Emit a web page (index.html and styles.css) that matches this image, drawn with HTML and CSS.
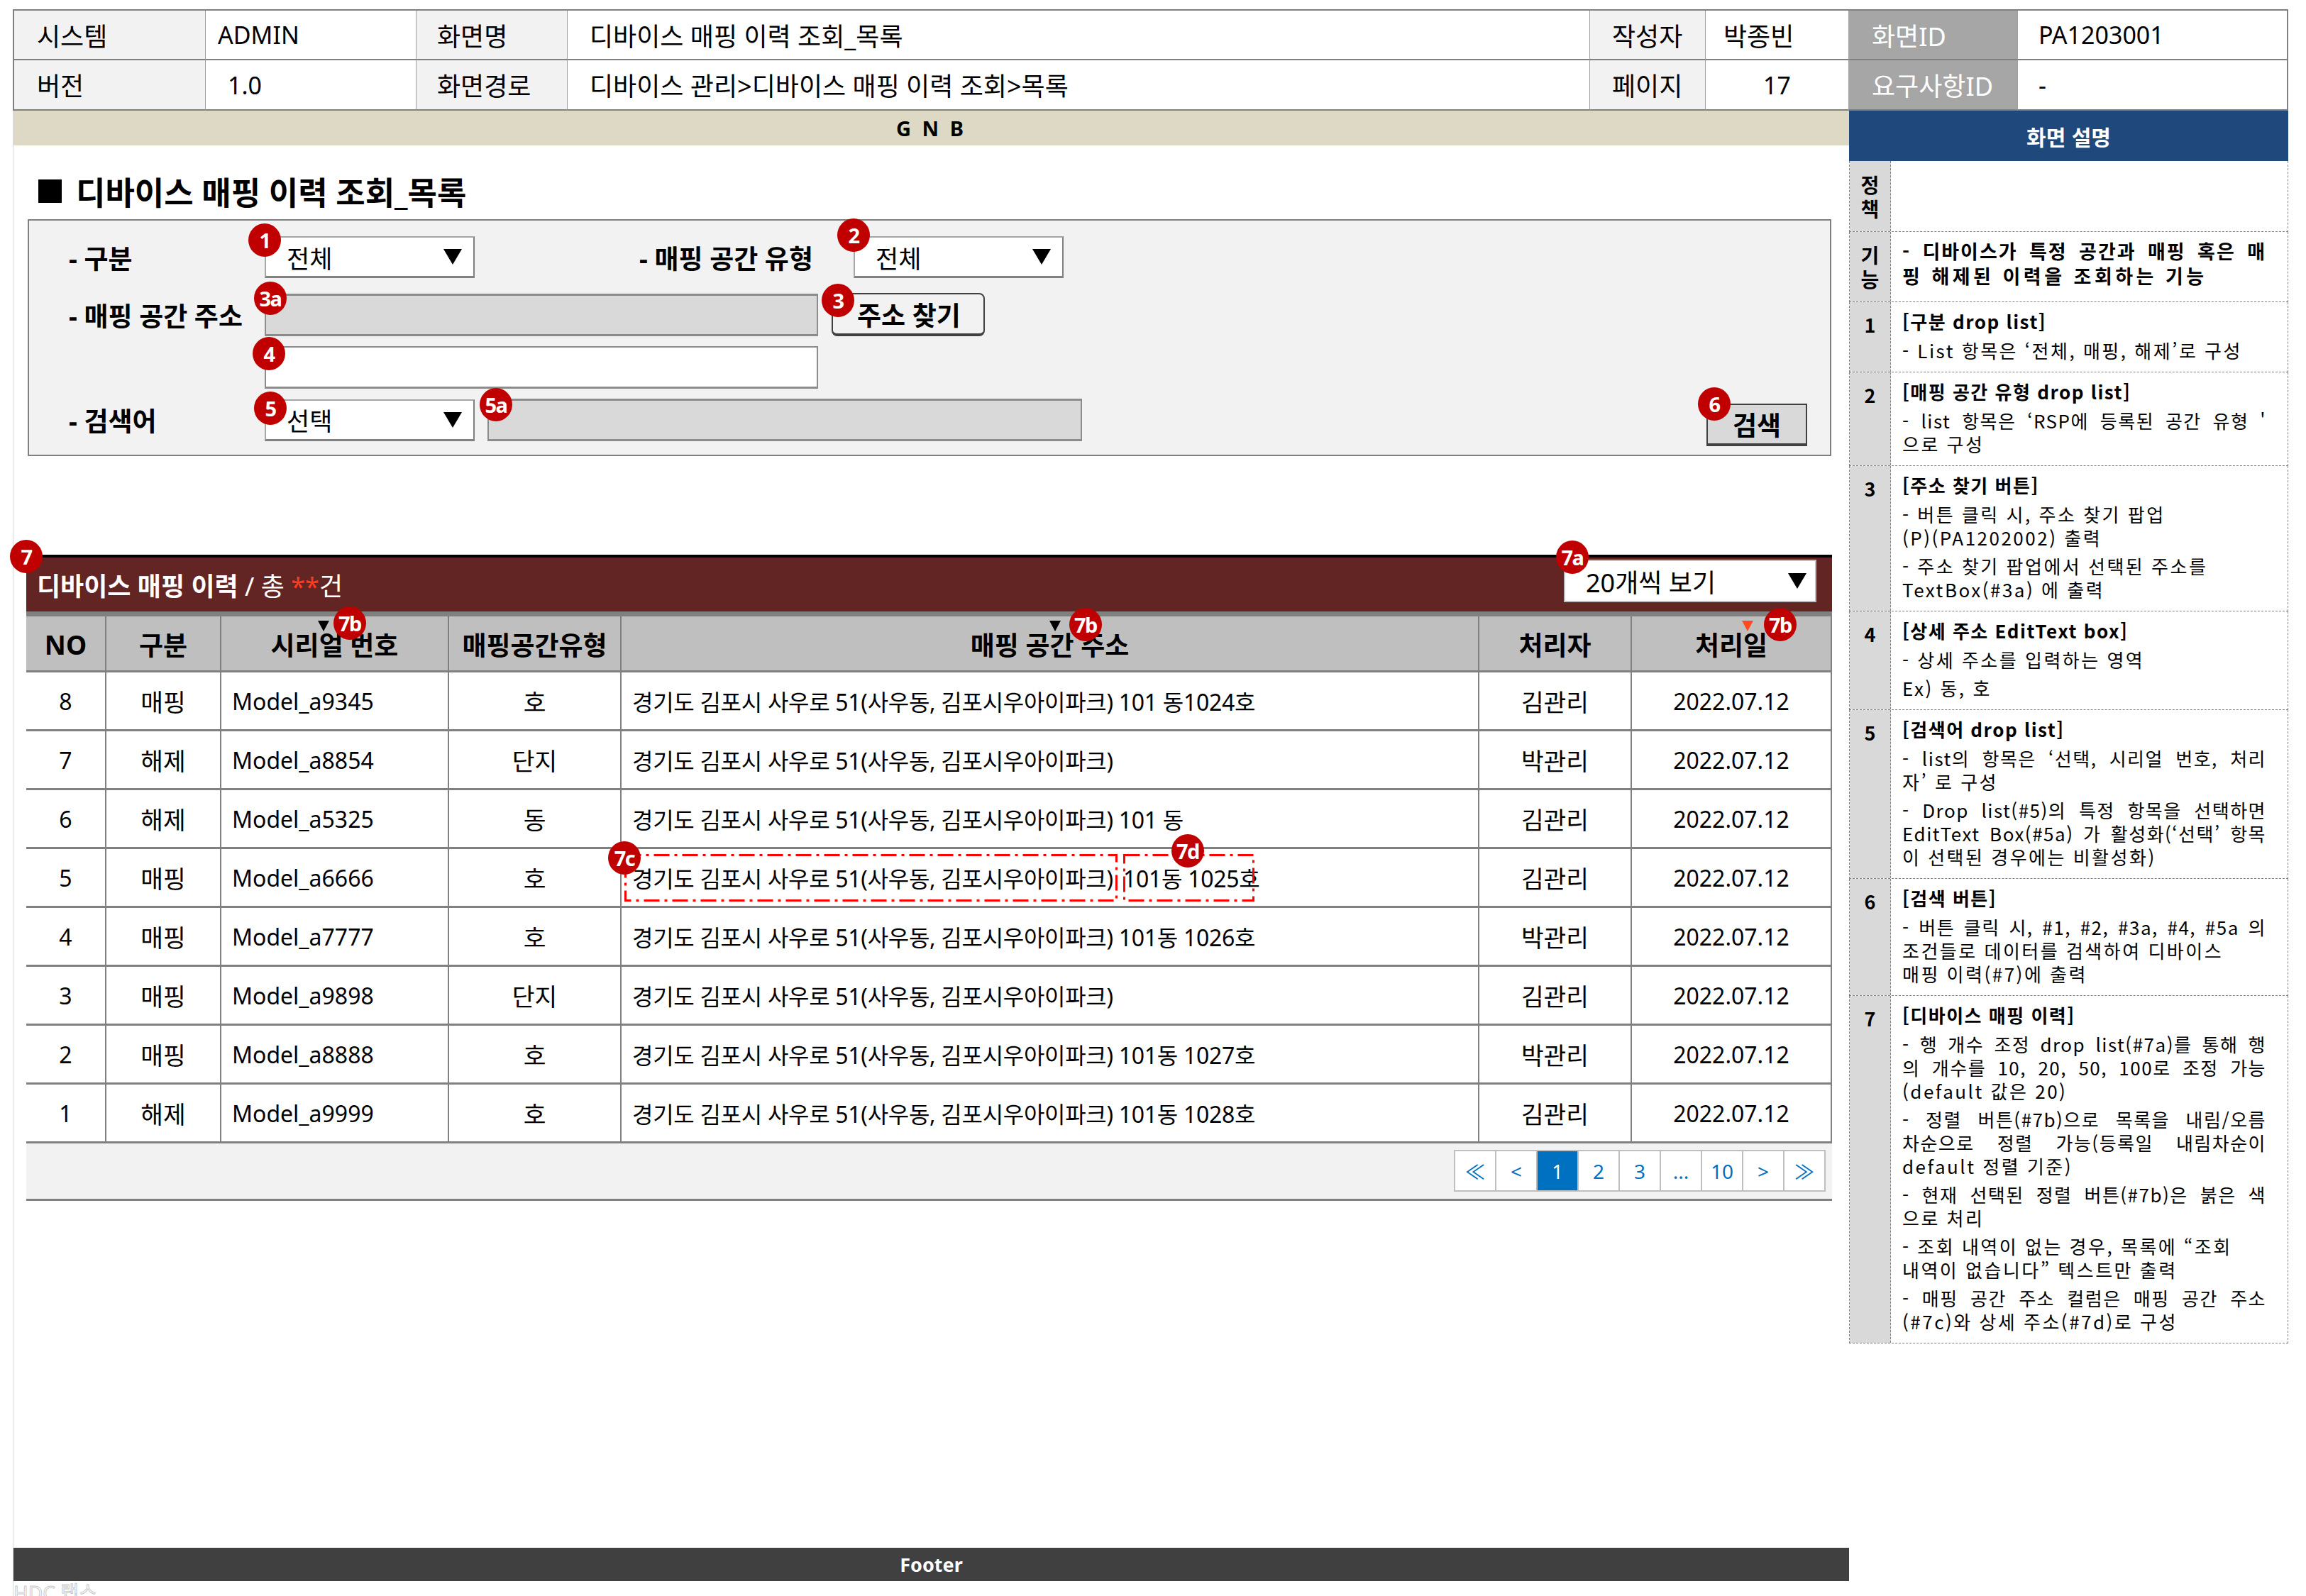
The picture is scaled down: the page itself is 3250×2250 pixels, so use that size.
FILE: index.html
```html
<!DOCTYPE html>
<html lang="ko">
<head>
<meta charset="utf-8">
<title>디바이스 매핑 이력 조회_목록</title>
<link rel="stylesheet" href="styles.css">
</head>
<body>
<div class="page">
  <div class="meta">
    <div class="c lab first p32">시스템</div>
    <div class="c val lat p17">ADMIN</div>
    <div class="c lab p29">화면명</div>
    <div class="c val p31">디바이스 매핑 이력 조회_목록</div>
    <div class="c lab p31">작성자</div>
    <div class="c val p25">박종빈</div>
    <div class="c dark p32">화면ID</div>
    <div class="c val lat last p29">PA1203001</div>
    <div class="c lab first p32">버전</div>
    <div class="c val lat p31">1.0</div>
    <div class="c lab p29">화면경로</div>
    <div class="c val p31">디바이스 관리&gt;디바이스 매핑 이력 조회&gt;목록</div>
    <div class="c lab p31">페이지</div>
    <div class="c val lat center">17</div>
    <div class="c dark p32">요구사항ID</div>
    <div class="c val lat last p29">-</div>
  </div>

  <div class="body">
    <div class="main">
      <div class="gnb">G N B</div>

      <h1 class="title"><span class="sq"></span>디바이스 매핑 이력 조회_목록</h1>

      <div class="search">
        <div class="srow r1">
          <div class="lbl">- 구분</div>
          <div class="sel">
            <span class="mk m1">1</span>
            <span>전체</span>
            <svg class="arr" viewBox="0 0 26 22"><polygon points="0,0 26,0 13,22"/></svg>
          </div>
          <div class="lbl lbl2">- 매핑 공간 유형</div>
          <div class="sel">
            <span class="mk m2">2</span>
            <span>전체</span>
            <svg class="arr" viewBox="0 0 26 22"><polygon points="0,0 26,0 13,22"/></svg>
          </div>
        </div>
        <div class="srow r2">
          <div class="lbl">- 매핑 공간 주소</div>
          <div class="tb dis wide"><span class="mk m3a">3a</span></div>
          <div class="btn addr"><span class="mk m3">3</span>주소 찾기</div>
        </div>
        <div class="srow r3">
          <div class="lbl"></div>
          <div class="tb wide"><span class="mk m4">4</span></div>
        </div>
        <div class="srow r4">
          <div class="lbl">- 검색어</div>
          <div class="sel">
            <span class="mk m5">5</span>
            <span>선택</span>
            <svg class="arr" viewBox="0 0 26 22"><polygon points="0,0 26,0 13,22"/></svg>
          </div>
          <div class="tb dis kw"><span class="mk m5a">5a</span></div>
          <div class="btn go"><span class="mk m6">6</span>검색</div>
        </div>
      </div>

      <div class="list">
        <span class="mk m7">7</span>
        <div class="bar">
          <div class="bar-title"><b>디바이스 매핑 이력</b> / 총 <span class="cnt">**</span>건</div>
          <div class="sel rows">
            <span class="mk m7a">7a</span>
            <span>20개씩 보기</span>
            <svg class="arr" viewBox="0 0 26 22"><polygon points="0,0 26,0 13,22"/></svg>
          </div>
        </div>

        <div class="tr th">
          <div class="td">NO</div>
          <div class="td">구분</div>
          <div class="td">시리얼 번호<svg class="sort s1" viewBox="0 0 16 15"><polygon points="0,0 16,0 8,15"/></svg><span class="mk m7b1">7b</span></div>
          <div class="td">매핑공간유형</div>
          <div class="td">매핑 공간 주소<svg class="sort s2" viewBox="0 0 16 15"><polygon points="0,0 16,0 8,15"/></svg><span class="mk m7b2">7b</span></div>
          <div class="td">처리자</div>
          <div class="td">처리일<svg class="sort s3 on" viewBox="0 0 16 15"><polygon points="0,0 16,0 8,15"/></svg><span class="mk m7b3">7b</span></div>
        </div>

        <div class="tr"><div class="td">8</div><div class="td k">매핑</div><div class="td l">Model_a9345</div><div class="td k">호</div><div class="td l ad">경기도 김포시 사우로 51(사우동, 김포시우아이파크) 101 동1024호</div><div class="td k">김관리</div><div class="td">2022.07.12</div></div>
        <div class="tr"><div class="td">7</div><div class="td k">해제</div><div class="td l">Model_a8854</div><div class="td k">단지</div><div class="td l ad">경기도 김포시 사우로 51(사우동, 김포시우아이파크)</div><div class="td k">박관리</div><div class="td">2022.07.12</div></div>
        <div class="tr"><div class="td">6</div><div class="td k">해제</div><div class="td l">Model_a5325</div><div class="td k">동</div><div class="td l ad">경기도 김포시 사우로 51(사우동, 김포시우아이파크) 101 동</div><div class="td k">김관리</div><div class="td">2022.07.12</div></div>
        <div class="tr"><div class="td">5</div><div class="td k">매핑</div><div class="td l">Model_a6666</div><div class="td k">호</div><div class="td l ad"><span class="base">경기도 김포시 사우로 51(사우동, 김포시우아이파크)</span><span class="dtl">101동 1025호</span><svg class="box b7c" viewBox="0 0 695 67"><rect x="1.5" y="1.5" width="692" height="64"/></svg><svg class="box b7d" viewBox="0 0 185 67"><rect x="1.5" y="1.5" width="182" height="64"/></svg><span class="mk m7c">7c</span><span class="mk m7d">7d</span></div><div class="td k">김관리</div><div class="td">2022.07.12</div></div>
        <div class="tr"><div class="td">4</div><div class="td k">매핑</div><div class="td l">Model_a7777</div><div class="td k">호</div><div class="td l ad">경기도 김포시 사우로 51(사우동, 김포시우아이파크) 101동 1026호</div><div class="td k">박관리</div><div class="td">2022.07.12</div></div>
        <div class="tr"><div class="td">3</div><div class="td k">매핑</div><div class="td l">Model_a9898</div><div class="td k">단지</div><div class="td l ad">경기도 김포시 사우로 51(사우동, 김포시우아이파크)</div><div class="td k">김관리</div><div class="td">2022.07.12</div></div>
        <div class="tr"><div class="td">2</div><div class="td k">매핑</div><div class="td l">Model_a8888</div><div class="td k">호</div><div class="td l ad">경기도 김포시 사우로 51(사우동, 김포시우아이파크) 101동 1027호</div><div class="td k">박관리</div><div class="td">2022.07.12</div></div>
        <div class="tr"><div class="td">1</div><div class="td k">해제</div><div class="td l">Model_a9999</div><div class="td k">호</div><div class="td l ad">경기도 김포시 사우로 51(사우동, 김포시우아이파크) 101동 1028호</div><div class="td k">김관리</div><div class="td">2022.07.12</div></div>

        <div class="pgarea">
          <div class="pager">
            <span>≪</span><span>&lt;</span><span class="on">1</span><span>2</span><span>3</span><span>...</span><span>10</span><span>&gt;</span><span>≫</span>
          </div>
        </div>
      </div>

      <div class="footer">Footer</div>
      <div class="wm">HDC 랩스</div>
    </div>

    <div class="desc">
      <div class="dhead">화면 설명</div>
      <div class="drow h-pol">
        <div class="dl v"><span>정</span><span>책</span></div>
        <div class="dc"></div>
      </div>
      <div class="drow h-fn">
        <div class="dl v"><span>기</span><span>능</span></div>
        <div class="dc bold">
          <div class="ln j">- 디바이스가 특정 공간과 매핑 혹은 매</div>
          <div class="ln">핑 해제된 이력을 조회하는 기능</div>
        </div>
      </div>
      <div class="drow">
        <div class="dl">1</div>
        <div class="dc">
          <div class="hd">[구분 drop list]</div>
          <div class="p"><div class="ln">- List 항목은 ‘전체, 매핑, 해제’로 구성</div></div>
        </div>
      </div>
      <div class="drow">
        <div class="dl">2</div>
        <div class="dc">
          <div class="hd">[매핑 공간 유형 drop list]</div>
          <div class="p"><div class="ln j">- list 항목은 ‘RSP에 등록된 공간 유형 '</div><div class="ln">으로 구성</div></div>
        </div>
      </div>
      <div class="drow">
        <div class="dl">3</div>
        <div class="dc">
          <div class="hd">[주소 찾기 버튼]</div>
          <div class="p"><div class="ln">- 버튼 클릭 시, 주소 찾기 팝업</div><div class="ln">(P)(PA1202002) 출력</div></div>
          <div class="p"><div class="ln">- 주소 찾기 팝업에서 선택된 주소를</div><div class="ln">TextBox(#3a) 에 출력</div></div>
        </div>
      </div>
      <div class="drow">
        <div class="dl">4</div>
        <div class="dc">
          <div class="hd">[상세 주소 EditText box]</div>
          <div class="p"><div class="ln">- 상세 주소를 입력하는 영역</div></div>
          <div class="p"><div class="ln">Ex) 동, 호</div></div>
        </div>
      </div>
      <div class="drow">
        <div class="dl">5</div>
        <div class="dc">
          <div class="hd">[검색어 drop list]</div>
          <div class="p"><div class="ln j">- list의 항목은 ‘선택, 시리얼 번호, 처리</div><div class="ln">자’ 로 구성</div></div>
          <div class="p"><div class="ln j">- Drop list(#5)의 특정 항목을 선택하면</div><div class="ln j">EditText Box(#5a) 가 활성화(‘선택’ 항목</div><div class="ln">이 선택된 경우에는 비활성화)</div></div>
        </div>
      </div>
      <div class="drow">
        <div class="dl">6</div>
        <div class="dc">
          <div class="hd">[검색 버튼]</div>
          <div class="p"><div class="ln j">- 버튼 클릭 시, #1, #2, #3a, #4, #5a 의</div><div class="ln">조건들로 데이터를 검색하여 디바이스</div><div class="ln">매핑 이력(#7)에 출력</div></div>
        </div>
      </div>
      <div class="drow">
        <div class="dl">7</div>
        <div class="dc">
          <div class="hd">[디바이스 매핑 이력]</div>
          <div class="p"><div class="ln j">- 행 개수 조정 drop list(#7a)를 통해 행</div><div class="ln j">의 개수를 10, 20, 50, 100로 조정 가능</div><div class="ln">(default 값은 20)</div></div>
          <div class="p"><div class="ln j">- 정렬 버튼(#7b)으로 목록을 내림/오름</div><div class="ln j">차순으로 정렬 가능(등록일 내림차순이</div><div class="ln">default 정렬 기준)</div></div>
          <div class="p"><div class="ln j">- 현재 선택된 정렬 버튼(#7b)은 붉은 색</div><div class="ln">으로 처리</div></div>
          <div class="p"><div class="ln">- 조회 내역이 없는 경우, 목록에 “조회</div><div class="ln">내역이 없습니다” 텍스트만 출력</div></div>
          <div class="p"><div class="ln j">- 매핑 공간 주소 컬럼은 매핑 공간 주소</div><div class="ln">(#7c)와 상세 주소(#7d)로 구성</div></div>
        </div>
      </div>
    </div>
  </div>
</div>
</body>
</html>
```

FILE: styles.css
```css
* { box-sizing: border-box; margin: 0; padding: 0; }
html, body { background: #fff; }
body {
  width: 3250px;
  height: 2250px;
  overflow: hidden;
  font-family: "Noto Sans", "Noto Sans CJK KR", sans-serif;
  color: #000;
}
.page { padding: 13px 25px 0 18px; }

/* ---------- meta header ---------- */
.meta {
  display: grid;
  grid-template-columns: 272px 297px 213px 1441px 163px 202px 238px 381px;
  grid-template-rows: 70px 71px;
  border-top: 2px solid #808080;
  width: 3207px;
}
.c {
  display: flex;
  align-items: center;
  font-size: 36px;
  border-right: 1px solid #a0a0a0;
  border-bottom: 2px solid #808080;
  white-space: nowrap;
}
.c.lat { font-size: 34px; }
.c.first { border-left: 2px solid #808080; }
.c.last { border-right: 2px solid #808080; }
.lab { background: #f2f2f2; }
.val { background: #fff; }
.dark { background: #a6a6a6; color: #fff; }
.center { justify-content: center; }
.p17 { padding-left: 17px; }
.p25 { padding-left: 25px; }
.p29 { padding-left: 29px; }
.p31 { padding-left: 31px; }
.p32 { padding-left: 32px; }

/* ---------- body ---------- */
.body { display: flex; }
.main {
  width: 2588px;
  height: 2094px;
  border-left: 1px solid #d9d9d9;
  display: flex;
  flex-direction: column;
}
.main > * { flex: none; }
.gnb {
  height: 49px;
  background: #ddd9c4;
  font-weight: 700;
  font-size: 29px;
  display: flex;
  align-items: center;
  justify-content: center;
  letter-spacing: 4px;
}
.title {
  display: flex;
  align-items: center;
  gap: 20px;
  height: 34px;
  margin: 47px 0 23px 35px;
  font-size: 45px;
  font-weight: 700;
  white-space: nowrap;
}
.sq { width: 33px; height: 33px; background: #000; flex: none; }

/* ---------- search box ---------- */
.search {
  margin-left: 20px;
  width: 2542px;
  height: 334px;
  background: #f2f2f2;
  border: 2px solid #808080;
  padding: 22px 32px 0 56px;
}
.srow { display: flex; align-items: center; }
.r1 { height: 59px; }
.r2 { height: 61px; margin-top: 21px; }
.r3 { height: 60px; margin-top: 14px; }
.r4 { height: 60px; margin-top: 14px; }
.lbl {
  width: 276px;
  flex: none;
  font-size: 37px;
  font-weight: 700;
  white-space: nowrap;
}
.lbl2 { margin-left: 232px; width: 302px; }
.sel {
  position: relative;
  width: 296px;
  height: 59px;
  flex: none;
  background: #fff;
  border: 2px solid #a6a6a6;
  border-right-color: #808080;
  border-bottom: 3px solid #808080;
  padding: 0 16px 0 29px;
  display: flex;
  align-items: center;
  justify-content: space-between;
  font-size: 35px;
  white-space: nowrap;
}
.arr { width: 26px; height: 22px; fill: #000; flex: none; }
.tb {
  position: relative;
  height: 60px;
  flex: none;
  background: #fff;
  border: 2px solid #8c8c8c;
  border-bottom-width: 3px;
}
.tb.dis { background: #d9d9d9; border-top-width: 3px; }
.tb.wide { width: 780px; }
.tb.kw { width: 838px; margin-left: 18px; }
.btn {
  position: relative;
  flex: none;
  display: flex;
  align-items: center;
  font-size: 37px;
  font-weight: 700;
  white-space: nowrap;
}
.btn.addr {
  width: 216px;
  height: 61px;
  margin-left: 19px;
  border: 2px solid #404040;
  border-bottom-width: 4px;
  border-radius: 8px;
  background: #f2f2f2;
  padding-left: 34px;
}
.btn.go {
  width: 142px;
  height: 60px;
  margin-left: auto;
  align-self: flex-end;
  margin-bottom: -7px;
  border: 2px solid #404040;
  border-bottom-width: 4px;
  background: #d9d9d9;
  justify-content: center;
}

/* ---------- markers ---------- */
.mk {
  position: absolute;
  width: 46px;
  height: 47px;
  border-radius: 50%;
  background: #c00000;
  color: #fff;
  font-weight: 700;
  font-size: 29px;
  letter-spacing: -1.5px;
  display: flex;
  align-items: center;
  justify-content: center;
  z-index: 5;
  line-height: 1;
}
.m1 { left: -25px; top: -20px; }
.m2 { left: -25px; top: -27px; }
.m3a { left: -17px; top: -20px; }
.m3 { left: -16px; top: -15px; }
.m4 { left: -19px; top: -15px; }
.m5 { left: -17px; top: -13px; }
.m5a { left: -13px; top: -18px; }
.m6 { left: -14px; top: -25px; }
.m7 { left: -23px; top: -21px; }
.m7a { left: -13px; top: -29px; }
.m7b1 { left: 158px; top: -14px; }
.m7b2 { left: 631px; top: -12px; }
.m7b3 { left: 186px; top: -12px; }
.m7c { left: -19px; top: -11px; }
.m7d { left: 775px; top: -21px; }

/* ---------- list ---------- */
.list {
  position: relative;
  margin: 139px 0 0 18px;
  width: 2545px;
}
.bar {
  height: 80px;
  border-top: 4px solid #000;
  background: #632523;
  display: flex;
  align-items: center;
  padding-left: 15px;
}
.bar-title {
  color: #fff;
  font-size: 36px;
  white-space: nowrap;
}
.bar-title .cnt { color: #ff3b1f; }
.sel.rows {
  width: 356px;
  height: 60px;
  margin-left: auto;
  margin-right: 22px;
  align-self: flex-start;
  margin-top: 3px;
  border: 2px solid #bfbfbf;
  font-size: 36px;
  padding-right: 12px;
}
.tr {
  display: grid;
  grid-template-columns: 113px 162px 321px 243px 1209px 215px 282px;
  height: 83px;
  border-bottom: 3px solid #808080;
  font-size: 32px;
}
.tr.th {
  height: 86px;
  border-top: 7px solid #808080;
  background: #bfbfbf;
  font-size: 37px;
  font-weight: 700;
}
.td {
  position: relative;
  border-right: 2px solid #808080;
  display: flex;
  align-items: center;
  justify-content: center;
  white-space: nowrap;
}
.td.k { font-size: 34.5px; }
.th .td { padding-top: 2px; }
.td.l { justify-content: flex-start; padding-left: 15px; }
.td.ad { letter-spacing: -0.3px; }
.base { display: inline-block; width: 692px; flex: none; }
.sort { position: absolute; top: 6px; width: 16px; height: 15px; fill: #000; }
.sort.on { fill: #ff4b1f; }
.s1 { left: 136px; }
.s2 { left: 603px; }
.s3 { left: 155px; }
.box { position: absolute; top: 7px; height: 67px; overflow: visible; }
.box rect { fill: none; stroke: #ff0000; stroke-width: 3; stroke-dasharray: 22 7 4 7; }
.b7c { left: 4px; width: 695px; }
.b7d { left: 707px; width: 185px; }
.pgarea {
  height: 81px;
  background: #f2f2f2;
  border-bottom: 3px solid #808080;
  display: flex;
  justify-content: flex-end;
  padding: 9px 9px 0 0;
}
.pager { display: flex; height: 59px; }
.pager span {
  width: 60px;
  height: 59px;
  margin-left: -2px;
  border: 2px solid #bfbfbf;
  background: #fff;
  color: #0070c0;
  font-size: 28px;
  display: flex;
  align-items: center;
  justify-content: center;
}
.pager span.on { background: #0070c0; color: #fff; position: relative; }

.footer {
  margin-top: 489px;
  height: 47px;
  background: #404040;
  color: #fff;
  font-weight: 700;
  font-size: 27px;
  display: flex;
  align-items: center;
  justify-content: center;
}
.wm {
  margin-top: 2px;
  font-size: 28px;
  line-height: 1;
  color: transparent;
  -webkit-text-stroke: 1px #c8c8c8;
}

/* ---------- description panel ---------- */
.desc {
  width: 619px;
  font-family: "Noto Sans CJK KR", "Noto Sans", sans-serif;
}
.dhead {
  height: 71px;
  background: #1f497d;
  color: #fff;
  font-weight: 700;
  font-size: 30px;
  display: flex;
  align-items: center;
  justify-content: center;
}
.drow {
  display: grid;
  grid-template-columns: 58px 1fr;
  border-left: 1px dashed #808080;
  border-right: 1px dashed #808080;
  border-bottom: 1px dashed #808080;
}
.h-pol { min-height: 100px; }
.h-fn { min-height: 99px; }
.dl {
  background: #d9d9d9;
  border-right: 1px dashed #808080;
  font-weight: 700;
  font-size: 27px;
  line-height: 34px;
  text-align: center;
  padding-top: 15px;
}
.dl.v {
  display: flex;
  flex-direction: column;
  justify-content: center;
  align-items: center;
  padding-top: 0;
  font-size: 28px;
}
.dc {
  padding: 10px 30px 14px 16px;
  font-size: 26px;
}
.dc.bold { font-weight: 700; font-size: 27px; padding-top: 9px; }
.dc.bold .ln { letter-spacing: 4.5px; line-height: 35px; }
.hd {
  font-weight: 700;
  font-size: 26px;
  line-height: 34px;
  letter-spacing: 1.5px;
  white-space: nowrap;
}
.p { margin-top: 7px; }
.ln {
  line-height: 33px;
  letter-spacing: 2.5px;
  white-space: nowrap;
}
.ln.j { letter-spacing: 1.5px; text-align: justify; text-align-last: justify; }
.dc.bold .ln.j { letter-spacing: 2px; }
```
